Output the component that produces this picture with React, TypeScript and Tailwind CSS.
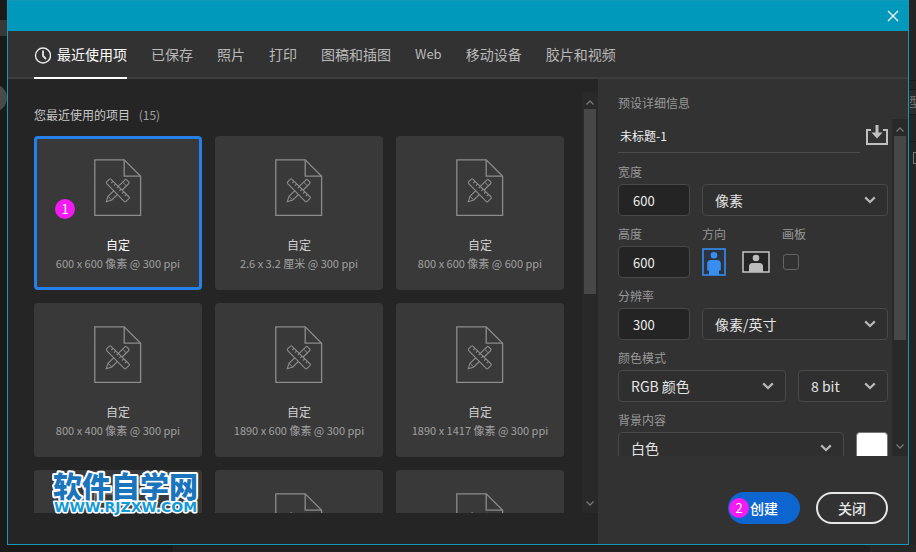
import type { ReactNode } from 'react'

const TABS = ['已保存', '照片', '打印', '图稿和插图', 'Web', '移动设备', '胶片和视频']

const RECENT = [
  '600 x 600 像素 @ 300 ppi',
  '2.6 x 3.2 厘米 @ 300 ppi',
  '800 x 600 像素 @ 600 ppi',
  '800 x 400 像素 @ 300 ppi',
  '1890 x 600 像素 @ 300 ppi',
  '1890 x 1417 像素 @ 300 ppi',
]

// rows that are only partly scrolled into view
const UPCOMING = ['a', 'b', 'c']

function DocIcon() {
  return (
    <svg className="shrink-0" width="48" height="58" viewBox="0 0 48 58" fill="none" stroke="#8c8c8c" strokeWidth="1.3">
      <path d="M0.8 0.8H30.2L46.6 17.2V56.4H0.8Z" />
      <path d="M30.2 0.8V17.2H46.6" />
      {/* pencil */}
      <path d="M12.3 42.7L14 37.3L31 20.8Q31.8 20 32.6 20.8L34.8 23Q35.5 23.7 34.8 24.5L17.8 41Z" strokeWidth="1.1" />
      <path d="M14 37.3L17.8 41M28.6 23.2L32.4 26.8" strokeWidth="1" />
      {/* ruler */}
      <path
        d="M12.6 22.8L15.4 20.1Q16.1 19.5 16.8 20.1L35.1 38Q35.7 38.7 35.1 39.4L31.8 42.6Q31.1 43.2 30.4 42.6L12.5 24.3Q12 23.5 12.6 22.8Z"
        fill="#393939"
        strokeWidth="1.1"
      />
      <path d="M19 22.3L17.3 24M21.7 24.9L20 26.6M24.4 27.5L22.7 29.2M27.1 30.1L25.4 31.8M29.8 32.8L28.1 34.5M32.5 35.4L30.8 37.1" strokeWidth="1.1" />
    </svg>
  )
}

function Chevron({ className }: { className?: string }) {
  return (
    <svg className={className} width="12" height="8" viewBox="0 0 12 8" fill="none" stroke="currentColor" strokeWidth="2.2">
      <path d="M1.2 1.4L6 6L10.8 1.4" />
    </svg>
  )
}

function ScrollBar({ thumb }: { thumb: string }) {
  return (
    <div className="flex w-4 shrink-0 flex-col items-center bg-[#292929] text-[#777777]">
      <div className="flex h-[17px] shrink-0 items-center pt-1">
        <svg width="8" height="5" viewBox="0 0 8 5" fill="none" stroke="currentColor" strokeWidth="1.3">
          <path d="M0.5 4.5L4 1L7.5 4.5" />
        </svg>
      </div>
      <div className={`w-3 bg-[#474747] ${thumb}`} />
      <div className="mt-auto flex h-5 shrink-0 items-center">
        <svg width="8" height="5" viewBox="0 0 8 5" fill="none" stroke="currentColor" strokeWidth="1.3">
          <path d="M0.5 0.5L4 4L7.5 0.5" />
        </svg>
      </div>
    </div>
  )
}

function Field({ label, htmlFor, children }: { label: string; htmlFor: string; children: ReactNode }) {
  return (
    <div>
      <label htmlFor={htmlFor} className="mb-0.5 block text-xs leading-5 text-[#989898]">{label}</label>
      {children}
    </div>
  )
}

function NumberBox({ id, value }: { id: string; value: string }) {
  return (
    <input
      id={id}
      defaultValue={value}
      className="block h-8 w-[72px] rounded border border-[#484848] bg-[#242424] px-3.5 text-[13px] text-[#ededed]"
    />
  )
}

function Select({ id, value, label }: { id: string; value: string; label?: string }) {
  return (
    <div className="relative">
      <select
        id={id}
        aria-label={label}
        className="block h-8 w-full appearance-none rounded border border-[#484848] bg-[#2f2f2f] px-3 text-sm text-[#e4e4e4]"
      >
        <option>{value}</option>
      </select>
      <Chevron className="pointer-events-none absolute top-3 right-3 text-[#b8b8b8]" />
    </div>
  )
}

function Marker({ n, className }: { n: number; className: string }) {
  return (
    <span className={`absolute flex size-5 items-center justify-center rounded-full bg-[#f31af3] text-[13px] leading-5 font-normal text-white ${className}`}>
      {n}
    </span>
  )
}

function PresetCard({ size, selected }: { size?: string; selected?: boolean }) {
  return (
    <button
      className={`relative flex h-[154px] flex-col items-center rounded-sm border-3 bg-[#393939] pt-5 ${selected ? 'border-[#2680eb]' : 'border-[#393939]'}`}
    >
      <DocIcon />
      {size && (
        <>
          <span className={`mt-[19px] text-xs leading-[18px] ${selected ? 'text-white' : 'text-[#d0d0d0]'}`}>自定</span>
          <span className="text-[11px] leading-[18px] whitespace-nowrap text-[#a0a0a0]">{size}</span>
        </>
      )}
      {selected && <Marker n={1} className="top-[60px] left-[18px]" />}
    </button>
  )
}

function Watermark() {
  return (
    <svg className="pointer-events-none absolute -bottom-1 left-[18px]" width="150" height="48" viewBox="0 0 150 48">
      <g fontWeight="900" stroke="#ffffff" strokeLinejoin="round" paintOrder="stroke">
        <text x="1" y="29" fontSize="29" strokeWidth="4" fill="#1a75bd" fontFamily="Noto Sans CJK SC, sans-serif">软件自学网</text>
        <text x="2" y="43" fontSize="14" strokeWidth="3" fill="#159ad8" fontFamily="DejaVu Sans, sans-serif">WWW.RJZXW.COM</text>
      </g>
    </svg>
  )
}

function Presets() {
  return (
    <main className="flex min-w-0 flex-1 bg-[#252525] pb-[31px]">
      <div className="flex min-w-0 flex-1 flex-col pr-[18px] pl-[26px]">
        <h2 className="mt-[26px] mb-[11px] text-xs leading-5 text-[#c8c8c8]">
          您最近使用的项目 <span className="ml-1.5 text-[#a0a0a0]">(15)</span>
        </h2>
        <div className="relative">
          <div className="h-[377px] overflow-hidden">
            <div className="grid grid-cols-3 gap-[13px]">
              {RECENT.map((size, i) => (
                <PresetCard key={size} size={size} selected={i === 0} />
              ))}
              {UPCOMING.map((key) => (
                <PresetCard key={key} />
              ))}
            </div>
          </div>
          <Watermark />
        </div>
      </div>
      <div className="flex pt-[13px]">
        <ScrollBar thumb="h-[185px]" />
      </div>
    </main>
  )
}

function Details() {
  return (
    <aside className="flex w-[310px] shrink-0 flex-col bg-[#323232]">
      <h2 className="mt-3.5 px-5 text-xs leading-5 text-[#989898]">预设详细信息</h2>
      <div className="mt-1.5 flex h-[337px] overflow-hidden">
        <form className="flex min-w-0 flex-1 flex-col gap-2 pr-1 pl-5 *:shrink-0">
          <div className="flex h-[35px] items-start justify-between">
            <input
              aria-label="名称"
              defaultValue="未标题-1"
              className="h-[34px] w-[242px] border-b border-[#4b4b4b] bg-transparent px-0.5 text-xs text-[#f0f0f0]"
            />
            <button type="button" aria-label="保存预设" className="flex pt-1.5">
              <svg width="22" height="21" viewBox="0 0 22 21" fill="none" stroke="#c0c0c0" strokeWidth="2">
                <path d="M5 5H1V19H21V5H17" />
                <path d="M11 0V9" strokeWidth="3" />
                <path d="M5.5 7.5H16.5L11 13.5Z" fill="#c0c0c0" stroke="none" />
              </svg>
            </button>
          </div>

          <div className="grid grid-cols-[72px_1fr] items-end gap-3">
            <Field label="宽度" htmlFor="width">
              <NumberBox id="width" value="600" />
            </Field>
            <Select id="unit" value="像素" label="单位" />
          </div>

          <div className="flex gap-3">
            <Field label="高度" htmlFor="height">
              <NumberBox id="height" value="600" />
            </Field>
            <Field label="方向" htmlFor="portrait">
              <div className="flex h-8 w-[68px] items-center justify-between">
                <button type="button" id="portrait" aria-label="纵向">
                  <svg width="24" height="28" viewBox="0 0 24 28" fill="#388ef0">
                    <rect x="1" y="1" width="22" height="26" fill="#2b3440" stroke="#388ef0" strokeWidth="1.6" />
                    <circle cx="12" cy="7.2" r="3.3" />
                    <path d="M5.2 15.5Q5.2 12 9 12H15Q18.8 12 18.8 15.5V22.5H17V27H7V22.5H5.2Z" />
                  </svg>
                </button>
                <button type="button" aria-label="横向">
                  <svg width="28" height="22" viewBox="0 0 28 22" fill="#bcbcbc">
                    <rect x="1" y="1" width="26" height="20" fill="#242424" stroke="#bcbcbc" strokeWidth="1.6" />
                    <circle cx="14" cy="7" r="3.3" />
                    <path d="M7 21V15.5Q7 12 10.5 12H17.5Q21 12 21 15.5V21Z" />
                  </svg>
                </button>
              </div>
            </Field>
            <Field label="画板" htmlFor="artboard">
              <div className="flex h-8 items-center">
                <input id="artboard" type="checkbox" className="ml-px size-4 appearance-none rounded-[3px] border border-[#646464]" />
              </div>
            </Field>
          </div>

          <div className="grid grid-cols-[72px_1fr] items-end gap-3">
            <Field label="分辨率" htmlFor="resolution">
              <NumberBox id="resolution" value="300" />
            </Field>
            <Select id="resolution-unit" value="像素/英寸" label="分辨率单位" />
          </div>

          <div className="grid grid-cols-[1fr_90px] items-end gap-3">
            <Field label="颜色模式" htmlFor="mode">
              <Select id="mode" value="RGB 颜色" />
            </Field>
            <Select id="depth" value="8 bit" label="位深度" />
          </div>

          <div className="grid grid-cols-[1fr_32px] items-end gap-3">
            <Field label="背景内容" htmlFor="background">
              <Select id="background" value="白色" />
            </Field>
            <button type="button" aria-label="背景颜色" className="h-8 rounded-sm border border-[#777777] bg-white" />
          </div>
        </form>
        <ScrollBar thumb="h-[204px]" />
      </div>

      <footer className="mt-9 flex justify-end gap-4 pr-5 pb-5">
        <button className="relative h-8 w-[72px] rounded-full bg-[#0d66d0] text-sm font-medium text-white">
          创建
          <Marker n={2} className="top-1.5 left-px" />
        </button>
        <button className="h-8 w-[72px] rounded-full border-2 border-[#e6e6e6] text-sm font-medium text-[#e6e6e6]">关闭</button>
      </footer>
    </aside>
  )
}

function Dialog() {
  return (
    <div className="flex min-w-0 flex-1 flex-col border border-[#1597b5] bg-[#323232]">
      <header className="flex h-[30px] shrink-0 items-center justify-end bg-[#0099bc] pr-[9px]">
        <button aria-label="关闭窗口">
          <svg width="12" height="12" viewBox="0 0 12 12" fill="none" stroke="#ffffff" strokeWidth="1.3">
            <path d="M1 1L11 11M11 1L1 11" />
          </svg>
        </button>
      </header>
      <nav className="flex h-12 shrink-0 gap-6 border-b-2 border-[#3d3d3d] pl-[26px] text-sm text-[#b9b9b9]">
        <a href="#recent" className="-mb-0.5 flex items-center gap-1.5 border-b-2 border-white text-white">
          <svg className="mt-0.5" width="17" height="17" viewBox="0 0 17 17" fill="none" stroke="#e8e8e8">
            <circle cx="9" cy="8.5" r="7.5" strokeWidth="1.4" />
            <path d="M9 3.5V9L12 12" strokeWidth="1.8" />
          </svg>
          最近使用项
        </a>
        {TABS.map((tab) => (
          <a key={tab} href={`#${tab}`} className={`flex items-center ${tab === 'Web' ? 'text-[13px]' : ''}`}>{tab}</a>
        ))}
      </nav>
      <div className="flex flex-1">
        <Presets />
        <Details />
      </div>
    </div>
  )
}

export default function App() {
  return (
    <div className="flex min-h-screen flex-col bg-[#1a1a1a] font-['Noto_Sans_CJK_SC',sans-serif]">
      <div className="flex flex-1">
        {/* slivers of the workspace behind the dialog */}
        <div className="flex w-[7px] shrink-0 flex-col items-end overflow-hidden pt-5">
          <div className="h-4 w-full bg-[#383838]" />
          <div className="mt-12 size-7 shrink-0 rounded-full bg-[#4a4a4a]" />
        </div>
        <Dialog />
        <div className="flex w-[7px] shrink-0 flex-col items-end overflow-hidden bg-[#242424] pt-20">
          <div className="h-2.5 w-full border-y border-[#1a1a1a]" />
          <div className="h-6 w-full overflow-hidden bg-[#2b2b2b] text-xs leading-6 text-[#777777]">型</div>
          <div className="h-7 w-full border-y border-[#1a1a1a]" />
          <div className="mt-2.5 h-3 w-[3px] border-y border-l border-[#777777]" />
        </div>
      </div>
      <div className="flex h-[7px] shrink-0">
        <div className="w-[173px]" />
        <div className="flex-1 bg-[#202020]" />
        <div className="w-[46px] bg-[#272727]" />
      </div>
    </div>
  )
}
